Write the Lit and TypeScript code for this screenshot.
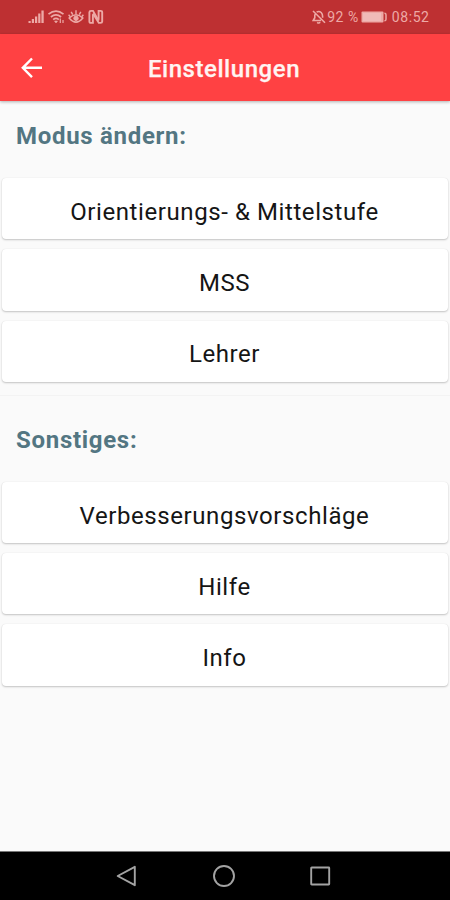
import { LitElement, html, css, svg } from "lit";
import { customElement, property } from "lit/decorators.js";

@customElement("status-bar")
class StatusBar extends LitElement {
  static styles = css`
    :host { display: flex; height: 34px; box-sizing: border-box; padding: 0 21px 0 28px; background: #be3032; color: #eda9a6; align-items: center; justify-content: space-between; font: 400 14px Roboto, sans-serif; }
    .group { display: flex; align-items: center; }
    svg { display: block; }
    .bell { margin-right: 1px; }
    .percent { letter-spacing: 0.5px; white-space: nowrap; }
    .battery { margin-left: 2px; }
    .time { margin-left: 4px; letter-spacing: 0.6px; margin-right: -0.6px; }
  `;
  render() {
    return html`
      <div class="group">
        <svg width="76" height="18" viewBox="0 0 76 18" fill="none" stroke="currentColor">
          <g fill="currentColor" stroke="none">
            <rect x="0.5" y="13" width="2.2" height="2" /><rect x="3.8" y="11" width="2.2" height="4" />
            <rect x="7" y="8.5" width="2.2" height="6.5" /><rect x="10.2" y="5.5" width="2.2" height="9.5" />
            <rect x="13.4" y="2.5" width="2.3" height="12.5" />
          </g>
          <g stroke-width="1.7">
            <path d="M20.5 6.2Q28 0 35.5 6.2M22.9 9Q28 4.7 33.1 9M25.2 11.6Q28 9.2 30.8 11.6" />
            <path d="M26.5 13L28 15L29.5 13Z" fill="currentColor" stroke-width=".6" />
            <path d="M32.3 10.5V15M35 12V15" stroke-width="1.2" />
          </g>
          <g stroke-width="1.6">
            <path d="M41.2 10Q48 3.5 54.8 10Q48 18.3 41.2 10Z" />
            <path d="M48 2.3V6M43.2 3.8L44.7 6.6M52.8 3.8L51.3 6.6M40.6 6.8L42.3 8.8M55.4 6.8L53.7 8.8" stroke-width="1.4" />
            <circle cx="48" cy="10.3" r="2.2" fill="currentColor" stroke-width="1" />
          </g>
          <g stroke-width="1.9">
            <path d="M64.9 6.2V14.9H63Q61.4 14.9 61.4 13.4V4.2Q61.4 2.9 63 2.9H65L70.6 12.8" />
            <path d="M70.6 11.8V2.9H72.6Q74.2 2.9 74.2 4.4V13.5Q74.2 14.9 72.6 14.9H70.8L65 5.4" />
          </g>
        </svg>
      </div>
      <div class="group">
        <svg class="bell" width="14" height="16" viewBox="0 0 14 16" fill="none" stroke="currentColor" stroke-width="1.6">
          <path d="M1 2L13 13.8M2.8 5.3V8.7L1.2 11.5H9M4.6 3.2Q7 1.6 9.2 3.5Q10.6 5 10.6 7.2V8.8M5.2 13.3Q6.8 14.8 8.2 13.3" />
        </svg>
        <span class="percent">92 %</span>
        <svg class="battery" width="27" height="14" viewBox="0 0 27 14">
          <rect x="0.5" y="1.5" width="22" height="11" rx="1" fill="currentColor" />
          <rect x="2" y="3" width="18" height="8" fill="#f0bab8" />
          <path d="M23.4 3.2Q25 3.2 25 4.8V9.2Q25 10.8 23.4 10.8" fill="none" stroke="currentColor" stroke-width="1.5" />
        </svg>
        <span class="time">08:52</span>
      </div>`;
  }
}

@customElement("title-bar")
class TitleBar extends LitElement {
  static styles = css`
    :host { display: grid; grid-template-columns: 64px 1fr 66px; align-items: center; height: 67px; background: #ff4143; color: #fff4f2; box-shadow: 0 1px 3px rgba(0, 0, 0, 0.3); position: relative; }
    .back { margin-left: 21px; display: block; }
    h1 { margin: 2px 0 0; text-align: center; font: 500 24px/32px Roboto, sans-serif; letter-spacing: 0.55px; -webkit-text-stroke: 0.25px currentColor; }
  `;
  render() {
    return html`
      <svg class="back" width="22" height="22" viewBox="0 0 22 22" fill="none" stroke="#fff" stroke-width="2.4">
        <path d="M21 10.8H2M11 1.5L1.8 10.8L11 20.1" />
      </svg>
      <h1>Einstellungen</h1>`;
  }
}

@customElement("settings-group")
class SettingsGroup extends LitElement {
  @property() heading = "";
  @property({ attribute: false }) items: string[] = [];
  static styles = css`
    :host { display: block; }
    h2 { margin: 0; padding: 19px 16px 26px; font: 700 24px/32px Roboto, sans-serif; letter-spacing: 0.7px; color: #537682; }
    .list { display: grid; gap: 10px; padding: 0 2.5px 0 1.5px; }
    button { display: block; width: 100%; height: 61.3px; margin: 0; padding: 6px 0 0; border: 0; border-radius: 4px; background: #fff; color: #151515; box-shadow: 0 1px 2px rgba(0, 0, 0, 0.22), 0 0 1px rgba(0, 0, 0, 0.1); font: 400 24px/32px Roboto, sans-serif; letter-spacing: 0.59px; }
  `;
  render() {
    return html`<h2>${this.heading}</h2>
      <div class="list">${this.items.map((item) => html`<button>${item}</button>`)}</div>`;
  }
}

@customElement("nav-bar")
class NavBar extends LitElement {
  static styles = css`
    :host { display: flex; justify-content: space-between; align-items: center; height: 49px; box-sizing: border-box; padding: 0 119px 1px 116px; background: #000; border-top: 1px solid #777; }
    svg { display: block; fill: none; stroke: #a3a3a3; stroke-width: 1.9; stroke-linejoin: round; }
  `;
  icon(shape: unknown) {
    return html`<svg width="22" height="24" viewBox="0 0 22 24">${shape}</svg>`;
  }
  render() {
    return html`
      ${this.icon(svg`<path d="M1.7 12L18.8 2.8V21.2Z" />`)}
      ${this.icon(svg`<circle cx="11" cy="12" r="10" />`)}
      ${this.icon(svg`<rect x="2.2" y="3.5" width="18" height="17" rx="0.5" />`)}`;
  }
}

@customElement("app-root")
class AppRoot extends LitElement {
  static styles = css`
    :host { display: flex; flex-direction: column; width: 450px; height: 900px; overflow: hidden; background: #fafafa; }
    main { flex: 1; min-height: 0; }
    .divider { height: 1px; margin: 13px 0 9px; background: #f3f3f3; }
  `;
  render() {
    return html`
      <status-bar></status-bar>
      <title-bar></title-bar>
      <main>
        <settings-group heading="Modus ändern:" .items=${["Orientierungs- & Mittelstufe", "MSS", "Lehrer"]}></settings-group>
        <div class="divider"></div>
        <settings-group heading="Sonstiges:" .items=${["Verbesserungsvorschläge", "Hilfe", "Info"]}></settings-group>
      </main>
      <nav-bar></nav-bar>`;
  }
}
